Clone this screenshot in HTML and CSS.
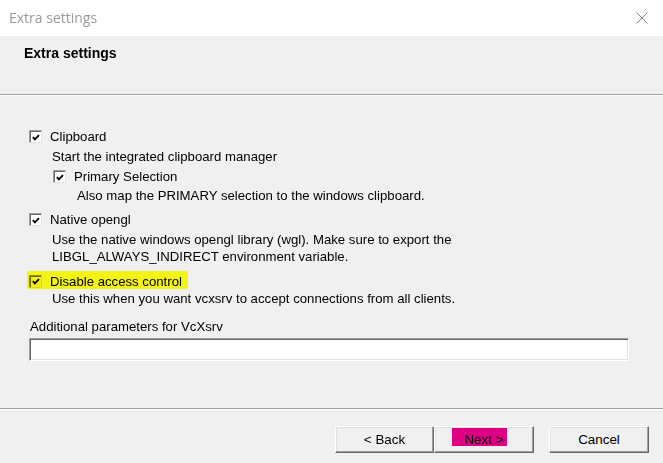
FILE: index.html
```html
<!DOCTYPE html>
<html>
<head>
<meta charset="utf-8">
<title>Extra settings</title>
<link rel="stylesheet" href="styles.css">
</head>
<body>
<div class="window">
  <div class="titlebar">
    <span class="title">Extra settings</span>
    <svg class="close" width="12" height="12" viewBox="0 0 12 12"><path d="M0.5 0.5 L11.5 11.5 M11.5 0.5 L0.5 11.5" stroke="#8a8a8a" stroke-width="1" fill="none"/></svg>
  </div>
  <div class="header">Extra settings</div>
  <div class="sep"></div>
  <div class="content">
    <div class="row r1">
      <span class="box"><svg width="11" height="11" viewBox="0 0 11 11"><polyline points="2,5 4.3,7.6 8.8,2.8" fill="none" stroke="#000" stroke-width="2"/></svg></span>
      <span class="label">Clipboard</span>
    </div>
    <div class="desc d1">Start the integrated clipboard manager</div>
    <div class="row nested r2">
      <span class="box"><svg width="11" height="11" viewBox="0 0 11 11"><polyline points="2,5 4.3,7.6 8.8,2.8" fill="none" stroke="#000" stroke-width="2"/></svg></span>
      <span class="label">Primary Selection</span>
    </div>
    <div class="desc nested-desc d2">Also map the PRIMARY selection to the windows clipboard.</div>
    <div class="row r3">
      <span class="box"><svg width="11" height="11" viewBox="0 0 11 11"><polyline points="2,5 4.3,7.6 8.8,2.8" fill="none" stroke="#000" stroke-width="2"/></svg></span>
      <span class="label">Native opengl</span>
    </div>
    <div class="desc d3">Use the native windows opengl library (wgl). Make sure to export the</div>
    <div class="desc d3b">LIBGL_ALWAYS_INDIRECT environment variable.</div>
    <div class="row r4">
      <span class="hl">
        <span class="box clear"><svg width="11" height="11" viewBox="0 0 11 11"><polyline points="2,5 4.3,7.6 8.8,2.8" fill="none" stroke="#000" stroke-width="2"/></svg></span>
        <span class="label">Disable access control</span>
      </span>
    </div>
    <div class="desc d4">Use this when you want vcxsrv to accept connections from all clients.</div>
    <div class="field-label">Additional parameters for VcXsrv</div>
    <div class="input"></div>
  </div>
  <div class="sep"></div>
  <div class="footer">
    <button class="btn back">&lt; Back</button>
    <button class="btn next"><span class="mark"></span>Next &gt;</button>
    <button class="btn cancel">Cancel</button>
  </div>
</div>
</body>
</html>
```

FILE: styles.css
```css
html, body {
  margin: 0;
  padding: 0;
}
body {
  width: 663px;
  height: 463px;
  overflow: hidden;
  background: #f0f0f0;
  font-family: "Liberation Sans", Arial, sans-serif;
  font-size: 13.2px;
  color: #000;
}
.window {
  display: flex;
  flex-direction: column;
  height: 463px;
}
.titlebar {
  height: 36px;
  flex: none;
  background: #fff;
  display: flex;
  align-items: center;
  justify-content: space-between;
  padding: 0 15px 0 9px;
  box-sizing: border-box;
}
.title {
  font-family: "Open Sans", "Noto Sans", sans-serif;
  font-size: 14px;
  color: #9a9a9a;
  margin-top: -1px;
}
.close {
  display: block;
  margin-top: -1px;
}
.header {
  height: 58px;
  flex: none;
  box-sizing: border-box;
  padding: 10px 0 0 24px;
  font-weight: bold;
  font-size: 14px;
  line-height: 15px;
}
.sep {
  flex: none;
  height: 1px;
  background: #a0a0a0;
  border-bottom: 1px solid #fff;
}
.content {
  height: 312px;
  flex: none;
  box-sizing: border-box;
  padding: 32px 0 0 29px;
  line-height: 17px;
}
.row {
  display: flex;
  align-items: center;
  height: 17px;
}
.box {
  width: 13px;
  height: 13px;
  box-sizing: border-box;
  flex: none;
  background: #fff;
  border: 1px solid;
  border-color: #a0a0a0 #e3e3e3 #e3e3e3 #a0a0a0;
  box-shadow: inset 1px 1px #696969;
  display: flex;
  align-items: center;
  justify-content: center;
  padding: 1px 0 0 1px;
}
.box svg {
  display: block;
}
.box.clear {
  background: transparent;
  border-color: rgba(0,0,0,0.4) rgba(0,0,0,0.1) rgba(0,0,0,0.1) rgba(0,0,0,0.4);
  box-shadow: inset 1px 1px rgba(0,0,0,0.55);
}
.label {
  margin-left: 8px;
  white-space: nowrap;
}
.nested {
  margin-left: 24px;
}
.desc {
  height: 17px;
  margin-left: 23px;
  white-space: nowrap;
}
.nested-desc {
  margin-left: 48px;
}
.d1 { margin-top: 3px; }
.r2 { margin-top: 3px; }
.d2 { margin-top: 2px; }
.r3 { margin-top: 7px; }
.d3 { margin-top: 3px; }
.r4 { margin-top: 7px; }
.d4 { margin-top: 1px; }
.hl {
  display: flex;
  align-items: center;
  height: 18px;
  box-sizing: border-box;
  margin: -1px 0 0 -2px;
  padding: 2px 6px 0 2px;
  background: #f3f316;
  border-radius: 3px;
}
.field-label {
  margin-top: 11px;
  margin-left: 1px;
  height: 17px;
}
.input {
  margin-top: 3px;
  width: 600px;
  height: 23px;
  box-sizing: border-box;
  background: #fff;
  border: 1px solid;
  border-color: #a0a0a0 #fff #fff #a0a0a0;
  box-shadow: inset 1px 1px #696969, inset -1px -1px #e3e3e3;
}
.footer {
  flex: 1;
  display: flex;
  align-items: flex-start;
  padding: 16px 0 0 335px;
}
.btn {
  position: relative;
  height: 27px;
  width: 100px;
  box-sizing: border-box;
  margin: 0;
  padding: 0;
  background: #f0f0f0;
  font-family: "Liberation Sans", Arial, sans-serif;
  font-size: 13.4px;
  color: #000;
  border: 1px solid;
  border-color: #fff #696969 #696969 #fff;
  box-shadow: inset -1px -1px #a0a0a0, inset 1px 1px #e3e3e3;
}
.back {
  width: 99px;
}
.cancel {
  margin-left: 15px;
}
.mark {
  position: absolute;
  left: 17px;
  top: 1px;
  width: 55px;
  height: 18px;
  background: #ec008c;
  mix-blend-mode: multiply;
}
```
